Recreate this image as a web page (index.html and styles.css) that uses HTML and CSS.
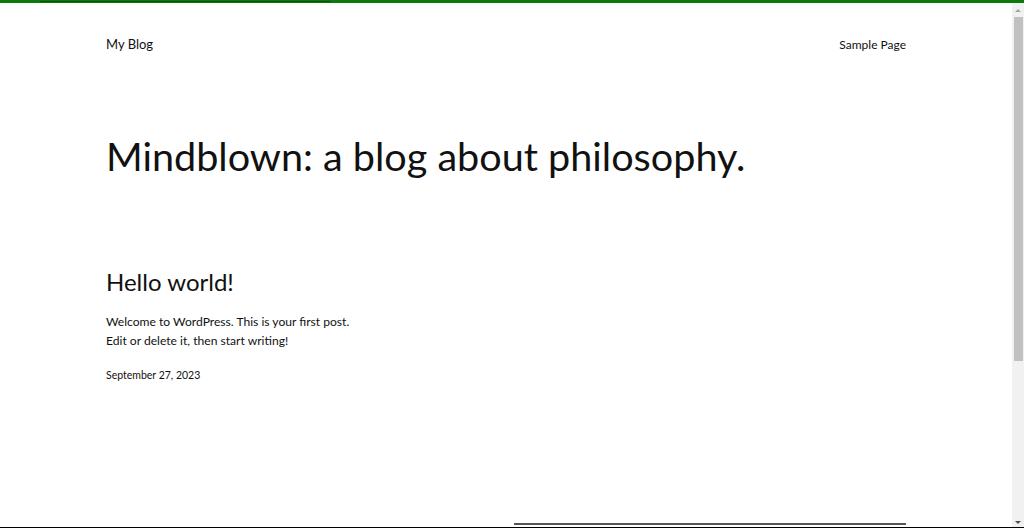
FILE: index.html
```html
<!DOCTYPE html>
<html lang="en">
<head>
    <meta charset="UTF-8">
    <meta name="viewport" content="width=device-width, initial-scale=1.0">
    <title>My Blog</title>
    <link rel="stylesheet" href="styles.css">
</head>
<body>
    <div class="progress"><span class="progress-fill"></span></div>

    <div class="window">
        <div class="site">
            <header class="site-header">
                <a class="site-title" href="#">My Blog</a>
                <nav class="site-nav">
                    <a href="#">Sample Page</a>
                </nav>
            </header>

            <main class="content">
                <h1 class="tagline">Mindblown: a blog about philosophy.</h1>

                <article class="post">
                    <h2 class="post-title">Hello world!</h2>
                    <p class="post-excerpt">Welcome to WordPress. This is your first post.<br>Edit or delete it, then start writing!</p>
                    <p class="post-date">September 27, 2023</p>
                </article>
            </main>

            <footer class="site-footer">
                <hr class="separator">
            </footer>
        </div>

        <div class="scrollbar">
            <span class="arrow up"></span>
            <span class="thumb"></span>
            <span class="arrow down"></span>
        </div>
    </div>
</body>
</html>
```

FILE: styles.css
```css
* {
    margin: 0;
    padding: 0;
    box-sizing: border-box;
}

html, body {
    height: 100%;
    overflow: hidden;
}

body {
    font-family: Lato, "Open Sans", sans-serif;
    color: #111;
    background-color: #fff;
    border-bottom: 1px solid #000;
    display: flex;
    flex-direction: column;
}

a {
    color: inherit;
    text-decoration: none;
}

/* loading bar along the top */
.progress {
    height: 3px;
    background-color: #0b7a0b;
    padding: 1px 0 1px 40px;
    flex-shrink: 0;
}

.progress-fill {
    display: block;
    width: 290px;
    height: 1px;
    background-color: #0c4f0c;
}

.window {
    flex: 1;
    display: flex;
    min-height: 0;
}

.site {
    flex: 1;
    display: flex;
    flex-direction: column;
    overflow: hidden;
}

.site-header {
    width: 800px;
    margin: 0 auto;
    padding-top: 30px;
    display: flex;
    justify-content: space-between;
    align-items: center;
}

.site-title {
    font-size: 13px;
    line-height: 20px;
}

.site-nav a {
    font-size: 12px;
    line-height: 20px;
}

.content {
    width: 800px;
    margin: 0 auto;
}

.tagline {
    font-size: 39.6px;
    font-weight: 400;
    line-height: 48px;
    margin-top: 77px;
}

.post {
    margin-top: 87px;
}

.post-title {
    font-size: 24px;
    font-weight: 400;
    line-height: 30px;
}

.post-excerpt {
    font-size: 12.1px;
    line-height: 19px;
    margin-top: 15px;
}

.post-date {
    font-size: 10.5px;
    line-height: 16px;
    margin-top: 17px;
}

.site-footer {
    width: 800px;
    margin: auto auto 0;
    padding-left: 408px;
}

.separator {
    border: none;
    height: 3px;
    border-top: 2px solid #555;
    margin-bottom: 1px;
}

/* page scrollbar */
.scrollbar {
    width: 12px;
    background-color: #f1f1f1;
    display: flex;
    flex-direction: column;
    align-items: center;
    padding: 6px 0 3px;
}

.thumb {
    width: 9px;
    height: 344px;
    margin-top: 5px;
    background-color: #c1c1c1;
}

.arrow {
    width: 0;
    height: 0;
    border-left: 3px solid transparent;
    border-right: 3px solid transparent;
}

.arrow.up {
    border-bottom: 3px solid #a3a3a3;
}

.arrow.down {
    margin-top: auto;
    border-top: 3px solid #505050;
}
```
